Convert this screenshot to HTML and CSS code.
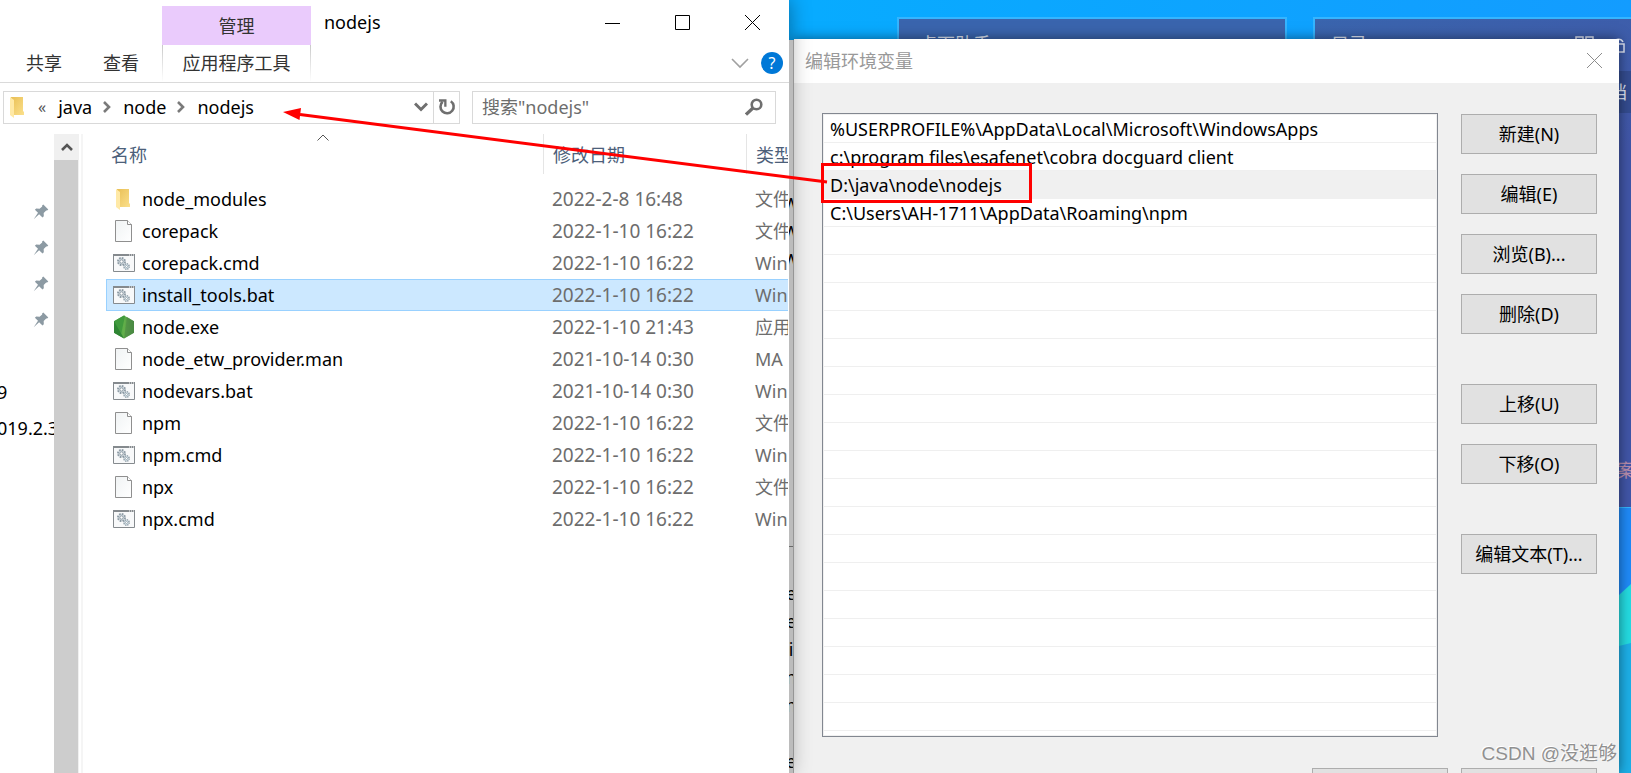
FILE: index.html
```html
<!DOCTYPE html>
<html lang="zh-CN">
<head>
<meta charset="utf-8">
<title>nodejs</title>
<link rel="stylesheet" href="styles.css">
</head>
<body>
<svg width="0" height="0" class="defs" aria-hidden="true">
  <defs>
    <linearGradient id="gFold" x1="0" y1="0" x2="1" y2="1"><stop offset="0" stop-color="#e9bf55"/><stop offset="1" stop-color="#fbe08c"/></linearGradient>
    <linearGradient id="gHex" x1="0" y1="0" x2="1" y2="0"><stop offset="0" stop-color="#3f9a3c"/><stop offset=".5" stop-color="#63b04a"/><stop offset="1" stop-color="#3f7f41"/></linearGradient>
    <linearGradient id="gPage" x1="0" y1="0" x2="1" y2="1"><stop offset="0" stop-color="#f0f3f4"/><stop offset="1" stop-color="#fff"/></linearGradient>
    <symbol id="folder" viewBox="0 0 22 24">
      <path d="M4 2h12v14l1 1v3H6z" fill="url(#gFold)"/>
      <path d="M3 2l4 3v18l-4-3z" fill="#ffe9a6"/>
    </symbol>
    <symbol id="page" viewBox="0 0 22 24">
      <path d="M2.500 1.500h12l4 4v17h-16z" fill="url(#gPage)" stroke="#8f8f8f"/>
      <path d="M14.500 1.500v4h4" fill="#fff" stroke="#8f8f8f"/>
    </symbol>
    <symbol id="script" viewBox="0 0 22 24">
      <path d="M.5 3.500h21v17H.5z" fill="#f8f9fa" stroke="#858a8e"/>
      <path d="M0 3h22v2H0z" fill="#858a8e"/>
      <path d="M16 4h1M18 4h1M20 4h1" stroke="#fff"/>
      <circle cx="8.500" cy="10.500" r="3.600" fill="#d5dde2" stroke="#8b99a3" stroke-width="1.800" stroke-dasharray="1.700 1.100"/>
      <circle cx="8.500" cy="10.500" r="1.700" fill="#fff" stroke="#8b99a3"/>
      <circle cx="13.500" cy="15.500" r="2.700" fill="#dce8ee" stroke="#8b99a3" stroke-width="1.400" stroke-dasharray="1.300 .8"/>
      <circle cx="13.500" cy="15.500" r="1" fill="#fff" stroke="#8b99a3" stroke-width=".7"/>
    </symbol>
    <symbol id="nodeexe" viewBox="0 0 22 24">
      <path d="M11 .5l10 5.700v11.600l-10 5.700-10-5.700V6.200z" fill="url(#gHex)"/>
      <path d="M1 6.200L11 .5l1 .5-4 18.500-7-1.700z" fill="#419b3e"/>
      <path d="M1 6.200l10 17.300-10-5.700z" fill="#2f8534"/>
      <path d="M14 2l7 4.200v11.600L11 23.500z" fill="#4f8d45" opacity=".7"/>
    </symbol>
    <symbol id="pin" viewBox="0 0 16 16">
      <path d="M10.300.6l5 5-1.200.9-.9-.1-2.500 2.700.1 3.200-1.300 1.200-3.400-3.300L.7 15.300l4.300-6.500-3.100-3 1.300-1.200 3.400.1 2.600-2.300-.1-1z" fill="#8c9aa3"/>
    </symbol>
    <symbol id="crumb" viewBox="0 0 10 12"><path d="M2 1l5 5-5 5" fill="none" stroke="#7a7a7a" stroke-width="2.600"/></symbol>
  </defs>
</svg>

<div class="desktop">
  <div class="panel panel-helper"><span class="panel-title">桌面助手</span></div>
  <div class="panel panel-dir">
    <div class="panel-bar">
      <span class="panel-title">目录</span>
      <svg class="panel-icons" width="52" height="22" viewBox="0 0 52 22" fill="none" stroke="#dfe5f5" stroke-width="1.500">
        <path d="M1 2h7v7H1zM11 2h7v7h-7zM1 12h7v7H1z"/>
        <path d="M39 9V7a5 5 0 0 1 9 0M38 9h11v8H38z"/>
      </svg>
    </div>
    <div class="panel-tab">文档</div>
    <div class="panel-note">方案</div>
  </div>
  <svg class="wallpaper" viewBox="0 0 12 265" preserveAspectRatio="none" aria-hidden="true">
    <path d="M0 0h12v265H0z" fill="#1f8af8"/>
    <path d="M0 87L12 76v60L0 139z" fill="#24dce2"/>
    <path d="M0 138l12-3v130H0z" fill="#1db0e8"/>
  </svg>

  <section class="explorer">
    <header class="titlebar">
      <div class="context-tab">管理</div>
      <h1 class="title">nodejs</h1>
      <div class="controls">
        <button aria-label="最小化"><svg width="16" height="16" viewBox="0 0 16 16"><path d="M0 8.500h15" stroke="#000"/></svg></button>
        <button aria-label="最大化"><svg width="16" height="16" viewBox="0 0 16 16"><path d="M.5.5h14v14H.5z" fill="none" stroke="#000"/></svg></button>
        <button aria-label="关闭"><svg width="16" height="16" viewBox="0 0 16 16"><path d="M0 0l15 15M15 0L0 15" stroke="#000"/></svg></button>
      </div>
    </header>
    <nav class="ribbon">
      <button class="tab tab-share">共享</button>
      <button class="tab tab-view">查看</button>
      <button class="tab tab-tools">应用程序工具</button>
      <div class="ribbon-end">
        <button aria-label="展开功能区"><svg width="18" height="12" viewBox="0 0 18 12"><path d="M1 2l8 8 8-8" fill="none" stroke="#a0a0a0" stroke-width="1.600"/></svg></button>
        <button class="help" aria-label="帮助">?</button>
      </div>
    </nav>
    <div class="address-row">
      <div class="address">
        <svg width="22" height="24"><use href="#folder"/></svg>
        <span class="more">«</span>
        <a href="#java">java</a>
        <svg width="10" height="12"><use href="#crumb"/></svg>
        <a href="#node">node</a>
        <svg width="10" height="12"><use href="#crumb"/></svg>
        <a href="#nodejs">nodejs</a>
        <button class="drop" aria-label="历史记录"><svg width="14" height="10" viewBox="0 0 14 10"><path d="M1 1.500l6 6 6-6" fill="none" stroke="#6f6f6f" stroke-width="3"/></svg></button>
        <button class="reload" aria-label="刷新"><svg width="18" height="18" viewBox="0 0 18 18"><path d="M12.800 3.200a6.600 6.600 0 1 1-8.200.6" fill="none" stroke="#6f6f6f" stroke-width="2.600"/><path d="M1 1.200h7.500v7.500H6.200V3.800H1z" fill="#6f6f6f"/></svg></button>
      </div>
      <div class="search">
        <input type="text" aria-label="搜索" placeholder="搜索&quot;nodejs&quot;">
        <svg width="18" height="18" viewBox="0 0 18 18" fill="none" stroke="#6f6f6f"><circle cx="11.500" cy="6.500" r="4.800" stroke-width="2.600"/><path d="M8 10l-7 6.500" stroke-width="3.200"/></svg>
      </div>
    </div>
    <div class="main">
      <aside class="sidebar">
        <ul class="pins">
          <li><svg width="16" height="16"><use href="#pin"/></svg></li>
          <li><svg width="16" height="16"><use href="#pin"/></svg></li>
          <li><svg width="16" height="16"><use href="#pin"/></svg></li>
          <li><svg width="16" height="16"><use href="#pin"/></svg></li>
          <li></li>
          <li><span>9</span></li>
          <li><span>019.2.3</span></li>
        </ul>
      </aside>
      <div class="scrollbar">
        <button aria-label="向上滚动"><svg width="12" height="10" viewBox="0 0 12 10"><path d="M1 8l5-5 5 5" fill="none" stroke="#555" stroke-width="2.600"/></svg></button>
        <div class="thumb"></div>
      </div>
      <div class="files">
        <svg class="sort" width="12" height="7" viewBox="0 0 12 7"><path d="M.5 6.500L6 1l5.500 5.500" fill="none" stroke="#555"/></svg>
        <table>
          <colgroup><col class="c-name"><col class="c-date"><col class="c-type"></colgroup>
          <thead><tr><th>名称</th><th>修改日期</th><th>类型</th></tr></thead>
          <tbody>
            <tr><td><div class="file"><svg width="22" height="24"><use href="#folder"/></svg>node_modules</div></td><td class="date">2022-2-8 16:48</td><td>文件</td></tr>
            <tr><td><div class="file"><svg width="22" height="24"><use href="#page"/></svg>corepack</div></td><td class="date">2022-1-10 16:22</td><td>文件</td></tr>
            <tr><td><div class="file"><svg width="22" height="24"><use href="#script"/></svg>corepack.cmd</div></td><td class="date">2022-1-10 16:22</td><td>Win</td></tr>
            <tr class="selected"><td><div class="file"><svg width="22" height="24"><use href="#script"/></svg>install_tools.bat</div></td><td class="date">2022-1-10 16:22</td><td>Win</td></tr>
            <tr><td><div class="file"><svg width="22" height="24"><use href="#nodeexe"/></svg>node.exe</div></td><td class="date">2022-1-10 21:43</td><td>应用</td></tr>
            <tr><td><div class="file"><svg width="22" height="24"><use href="#page"/></svg>node_etw_provider.man</div></td><td class="date">2021-10-14 0:30</td><td>MA</td></tr>
            <tr><td><div class="file"><svg width="22" height="24"><use href="#script"/></svg>nodevars.bat</div></td><td class="date">2021-10-14 0:30</td><td>Win</td></tr>
            <tr><td><div class="file"><svg width="22" height="24"><use href="#page"/></svg>npm</div></td><td class="date">2022-1-10 16:22</td><td>文件</td></tr>
            <tr><td><div class="file"><svg width="22" height="24"><use href="#script"/></svg>npm.cmd</div></td><td class="date">2022-1-10 16:22</td><td>Win</td></tr>
            <tr><td><div class="file"><svg width="22" height="24"><use href="#page"/></svg>npx</div></td><td class="date">2022-1-10 16:22</td><td>文件</td></tr>
            <tr><td><div class="file"><svg width="22" height="24"><use href="#script"/></svg>npx.cmd</div></td><td class="date">2022-1-10 16:22</td><td>Win</td></tr>
          </tbody>
        </table>
      </div>
    </div>
  </section>

  <section class="behind">
    <ul class="vars user"><li>W</li><li>W</li><li>W</li></ul>
    <ul class="vars system"><li>e</li><li>e</li><li>i</li><li>n</li><li>n</li><li></li><li>e</li></ul>
  </section>

  <section class="dialog">
    <header class="dialog-title">
      <h2>编辑环境变量</h2>
      <button aria-label="关闭"><svg width="16" height="16" viewBox="0 0 16 16"><path d="M0 0l15 15M15 0L0 15" stroke="#8c8c8c"/></svg></button>
    </header>
    <div class="dialog-body">
      <ul class="paths">
        <li>%USERPROFILE%\AppData\Local\Microsoft\WindowsApps</li>
        <li>c:\program files\esafenet\cobra docguard client</li>
        <li class="current">D:\java\node\nodejs</li>
        <li>C:\Users\AH-1711\AppData\Roaming\npm</li>
      </ul>
      <div class="actions">
        <div class="group"><button>新建(N)</button><button>编辑(E)</button><button>浏览(B)...</button><button>删除(D)</button></div>
        <div class="group"><button>上移(U)</button><button>下移(O)</button></div>
        <div class="group"><button>编辑文本(T)...</button></div>
      </div>
    </div>
    <footer class="dialog-foot"><button aria-label="确定"></button><button aria-label="取消"></button></footer>
  </section>

  <svg class="marks" width="760" height="100" viewBox="0 0 760 100" aria-hidden="true">
    <path d="M20 14.500L547 82" stroke="#f00" stroke-width="3"/>
    <path d="M3 12l18-4-1.500 12z" fill="#f00"/>
    <path d="M542.500 64.500h208v37h-208z" fill="none" stroke="#f00" stroke-width="3"/>
  </svg>
  <div class="watermark">CSDN @没逛够</div>
</div>
</body>
</html>
```
FILE: styles.css
```css
* { box-sizing: border-box; }
body {
  margin: 0;
  font: 18px/28px "Noto Sans", "Noto Sans CJK SC", sans-serif;
  color: #000;
}
ul { list-style: none; margin: 0; padding: 0; }
h1, h2 { margin: 0; font-size: 18px; font-weight: 400; }
svg { display: block; flex: none; }
button { font: inherit; color: inherit; border: 0; padding: 0; background: none; display: flex; align-items: center; justify-content: center; }
a { color: inherit; text-decoration: none; }
.defs { position: absolute; }

.desktop {
  position: relative;
  display: grid;
  grid-template-columns: 789fr 5fr 825fr 12fr;
  grid-template-rows: 100vh;
  height: 100vh;
  overflow: hidden;
  background: linear-gradient(90deg, #08abff 50%, #139cff);
}

/* Desktop widgets under the windows */
.panel { position: absolute; top: 17px; border: 2px solid #35b5ff; background: #3a65ae; color: #dfe5f5; overflow: hidden; }
.panel-helper { left: 897px; width: 390px; height: 300px; padding: 11px 20px; }
.panel-dir { left: 1313px; right: -20px; height: 492px; background: linear-gradient(160deg, #3a65ae, #4156a8 40%); }
.panel-bar { display: flex; justify-content: space-between; height: 52px; padding: 11px 22px 0 16px; }
.panel-icons { margin-top: 5px; }
.panel-tab { height: 42px; padding: 7px 22px; background: #344c90; text-align: right; }
.panel-note { margin-top: 343px; padding: 0 14px; text-align: right; color: #b98fae; }
.wallpaper { position: absolute; right: 0; bottom: 0; width: 12px; height: 265px; }

/* Explorer window */
.explorer { grid-column: 1; z-index: 2; min-width: 0; display: flex; flex-direction: column; background: #fff; box-shadow: 0 0 20px rgba(0, 0, 0, .4); }
.titlebar { display: flex; height: 45px; padding: 6px 1px 0 162px; }
.context-tab { width: 149px; display: flex; align-items: center; justify-content: center; background: #eacbfc; color: #333; }
.title { margin: 2px auto 0 13px; }
.controls { display: flex; height: 34px; }
.controls button { width: 70px; }
.ribbon { display: flex; height: 38px; border-bottom: 1px solid #dadada; color: #333; }
.tab { height: 36px; }
.tab-share { width: 88px; }
.tab-view { width: 66px; margin-right: 8px; }
.tab-tools { width: 149px; border: 1px solid; border-width: 0 1px; border-image: linear-gradient(#c8c8c8, #fff) 1; }
.ribbon-end { display: flex; gap: 12px; margin-left: auto; padding-right: 6px; height: 36px; align-items: center; }
.help { width: 22px; height: 22px; border-radius: 50%; background: #0078d7; color: #fff; font-size: 16px; }
.address-row { display: flex; gap: 12px; padding: 8px 13px 0 3px; }
.address { flex: 457 1 457px; min-width: 0; height: 33px; display: flex; align-items: center; border: 1px solid #d9d9d9; padding: 0 0 1px 3px; }
.address .more { margin: 0 12px 0 9px; font-size: 16px; color: #555; }
.address a + svg { margin: 0 11px 0 10px; }
.drop { margin-left: auto; width: 24px; height: 31px; }
.reload { width: 26px; height: 31px; border-left: 1px solid #d9d9d9; }
.search { flex: 304 1 304px; min-width: 0; height: 33px; display: flex; align-items: center; border: 1px solid #d9d9d9; padding: 0 12px 1px 9px; }
.search input { flex: 1; min-width: 0; border: 0; padding: 0; font: inherit; outline: 0; background: none; }
.search input::placeholder { color: #6d6d6d; opacity: 1; }
.main { flex: 1; min-height: 0; display: flex; margin-top: 10px; }
.sidebar { width: 54px; overflow: hidden; }
.pins { padding-top: 60px; }
.pins li { height: 36px; display: flex; align-items: center; }
.pins svg { margin-left: 33px; }
.pins span { margin-left: -3px; white-space: nowrap; }
.scrollbar { width: 25px; background: #f0f0f0; display: flex; flex-direction: column; }
.scrollbar button { height: 26px; }
.thumb { flex: 1; margin-right: 1px; background: #cdcdcd; }
.files { position: relative; flex: 1; min-width: 0; margin-left: 2px; padding: 0 1px 0 23px; border-left: 2px solid #f5f5f5; overflow: hidden; }
.sort { position: absolute; left: 234px; top: 0; }
table { width: 100%; table-layout: fixed; border-collapse: separate; border-spacing: 0; }
.c-name { width: 437px; }
.c-date { width: 203px; }
th { height: 40px; padding: 1px 0 0 9px; text-align: left; font-weight: 400; color: #4c607a; border-left: 1px solid #e5e5e5; white-space: nowrap; overflow: hidden; }
th:first-child { border-left: 0; padding-left: 5px; }
tbody::before { content: ""; display: block; height: 9px; }
td { height: 32px; padding: 0 0 0 9px; color: #6d6d6d; white-space: nowrap; overflow: hidden; }
td:first-child { padding-left: 7px; color: #000; }
.date { font-size: 19px; }
.file { display: flex; align-items: center; gap: 7px; }
.selected td { background: #cce8ff; box-shadow: inset 0 1px #99d1ff, inset 0 -1px #99d1ff; }
.selected td:first-child { box-shadow: inset 1px 1px #99d1ff, inset 0 -1px #99d1ff; }

/* Window visible only between the two front ones */
.behind { grid-column: 2; z-index: 3; margin-top: 40px; min-width: 0; overflow: hidden; background: #bcbcbc; border-right: 1px solid #969696; }
.vars li { height: 28px; display: flex; justify-content: center; }
.user { padding-top: 150px; height: 507px; border-bottom: 1px solid #6a6a6a; }
.system { padding-top: 32px; }

/* Environment variable dialog */
.dialog { grid-column: 3; z-index: 1; margin-top: 39px; min-width: 0; background: #f0f0f0; box-shadow: 0 0 12px rgba(0, 0, 0, .5); overflow: hidden; display: flex; flex-direction: column; }
.dialog-title { flex: none; height: 44px; display: flex; align-items: center; justify-content: space-between; padding: 0 16px 1px 11px; background: #fff; color: #999; }
.dialog-body { flex: none; display: flex; gap: 23px; padding: 30px 22px 0 28px; }
.paths {
  flex: 1; min-width: 0; height: 624px; padding: 1px;
  border: 1px solid #828790;
  background: #fff repeating-linear-gradient(transparent 0 27px, #efefef 27px 28px) content-box;
}
.paths li { height: 28px; padding-left: 6px; white-space: nowrap; }
.paths .current { background: #f0f0f0; }
.actions { width: 136px; padding-top: 1px; display: flex; flex-direction: column; gap: 50px; }
.group { display: flex; flex-direction: column; gap: 20px; }
.group button, .dialog-foot button { width: 136px; height: 40px; background: #e1e1e1; border: 1px solid #adadad; }
.dialog-foot { display: flex; justify-content: flex-end; gap: 13px; padding: 31px 22px 0 0; }

/* Red pointer from the selected path to the address bar */
.marks { position: absolute; z-index: 3; left: 280px; top: 100px; overflow: visible; }
.watermark { position: absolute; z-index: 3; right: 14px; bottom: 5px; font: 19px/28px "Liberation Sans", "Noto Sans CJK SC", sans-serif; color: #909090; text-shadow: -1px -1px #fff; }
```
